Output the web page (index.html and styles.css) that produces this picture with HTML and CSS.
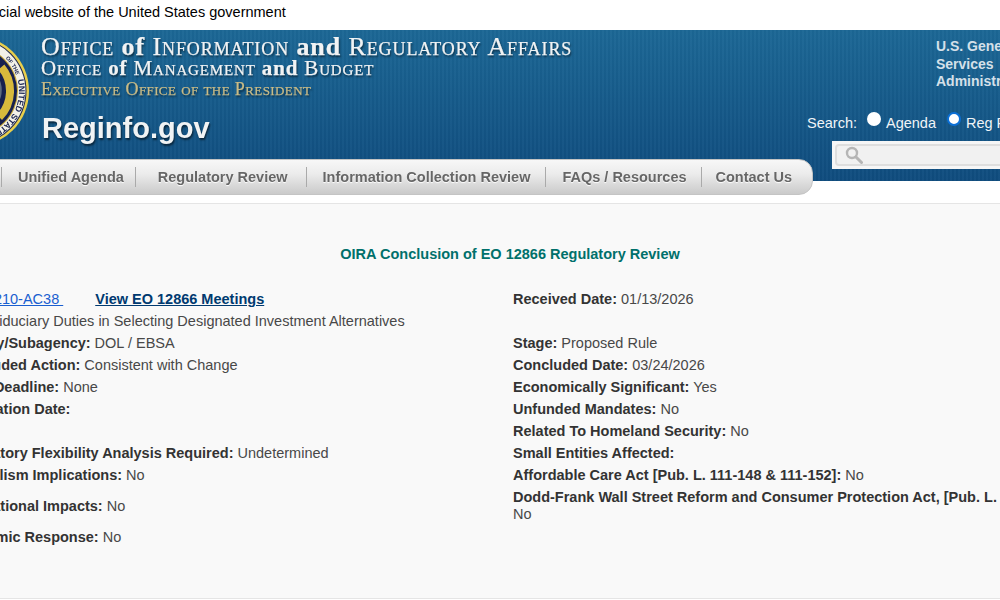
FILE: index.html
```html
<!DOCTYPE html>
<html>
<head>
    <meta charset="utf-8">
    <meta name="viewport" content="width=device-width, initial-scale=1.0">
    <title>Reginfo.gov - OIRA Conclusion of EO 12866 Regulatory Review</title>
    <link rel="stylesheet" href="styles.css">
</head>
<body>
<div class="page">
    <div class="gov-bar">An official website of the United States government</div>

    <header class="banner">
        <svg class="seal" viewBox="0 0 112 112" aria-hidden="true">
            <defs>
                <path id="seal-arc" d="M10 56a46 46 0 1 1 92 0a46 46 0 1 1-92 0"/>
            </defs>
            <circle cx="56" cy="56" r="56" fill="#e8cf4c"/>
            <circle cx="56" cy="56" r="53.5" fill="#1b2550"/>
            <circle cx="56" cy="56" r="52.5" fill="#f3f1e8"/>
            <circle cx="56" cy="56" r="45" fill="#c9a93a"/>
            <circle cx="56" cy="56" r="44" fill="#17204e"/>
            <text class="seal-text"><textPath href="#seal-arc" startOffset="48">PRESIDENT</textPath></text>
            <text class="seal-text seal-small"><textPath href="#seal-arc" startOffset="108">OF THE</textPath></text>
            <text class="seal-text"><textPath href="#seal-arc" startOffset="133">UNITED STATES</textPath></text>
            <path d="M84.3 32.2A37 37 0 0 1 82.2 82.2" fill="none" stroke="#d8b93c" stroke-width="8"/>
            <path d="M78 40a24 24 0 0 1 0 30" fill="none" stroke="#5d6a80" stroke-width="3"/>
        </svg>
        <div class="titles">
            <div class="title-main">Office <span class="lower">of</span> Information <span class="lower">and</span> Regulatory Affairs</div>
            <div class="title-sub">Office <span class="lower">of</span> Management <span class="lower">and</span> Budget</div>
            <div class="title-exec">Executive Office of the President</div>
            <div class="site-name">Reginfo.gov</div>
        </div>
        <div class="banner-right">
            <div class="gsa">U.S. General Services Administration</div>
            <form class="search-options">
                <span class="search-label">Search:</span>
                <label class="option"><input type="radio" name="scope"> Agenda</label>
                <label class="option"><input type="radio" name="scope" checked> Reg Review</label>
            </form>
            <div class="search-box">
                <div class="search-field">
                    <svg class="search-icon" viewBox="0 0 18 18" aria-hidden="true">
                        <circle cx="7" cy="7" r="5" fill="none" stroke="#b5b5b5" stroke-width="2.4"/>
                        <path d="M11 11l5.5 5.5" stroke="#b5b5b5" stroke-width="3" stroke-linecap="round"/>
                    </svg>
                </div>
            </div>
        </div>
    </header>

    <nav class="nav">
        <a class="nav-item nav-home">Home</a>
        <a class="nav-item nav-agenda">Unified Agenda</a>
        <a class="nav-item nav-review">Regulatory Review</a>
        <a class="nav-item nav-collection">Information Collection Review</a>
        <a class="nav-item nav-faq">FAQs / Resources</a>
        <a class="nav-item nav-contact">Contact Us</a>
    </nav>

    <main class="content">
        <h1 class="heading">OIRA Conclusion of EO 12866 Regulatory Review</h1>
        <div class="columns">
            <div class="col">
                <div class="row"><b>RIN:</b> <a class="rin" href="#">1210-AC38 </a><a class="meetings" href="#">View EO 12866 Meetings</a></div>
                <div class="row"><b>Title:</b> Fiduciary Duties in Selecting Designated Investment Alternatives</div>
                <div class="row"><b>Agency/Subagency:</b> DOL / EBSA</div>
                <div class="row"><b>Concluded Action:</b> Consistent with Change</div>
                <div class="row"><b>Legal Deadline:</b> None</div>
                <div class="row"><b>Publication Date:</b></div>
                <div class="row row-empty"></div>
                <div class="row"><b>Regulatory Flexibility Analysis Required:</b> Undetermined</div>
                <div class="row row-tall"><b>Federalism Implications:</b> No</div>
                <div class="row row-tall"><b>International Impacts:</b> No</div>
                <div class="row"><b>Pandemic Response:</b> No</div>
            </div>
            <div class="col">
                <div class="row"><b>Received Date:</b> 01/13/2026</div>
                <div class="row row-empty"></div>
                <div class="row"><b>Stage:</b> Proposed Rule</div>
                <div class="row"><b>Concluded Date:</b> 03/24/2026</div>
                <div class="row"><b>Economically Significant:</b> Yes</div>
                <div class="row"><b>Unfunded Mandates:</b> No</div>
                <div class="row"><b>Related To Homeland Security:</b> No</div>
                <div class="row"><b>Small Entities Affected:</b></div>
                <div class="row"><b>Affordable Care Act [Pub. L. 111-148 &amp; 111-152]:</b> No</div>
                <div class="row"><b>Dodd-Frank Wall Street Reform and Consumer Protection Act, [Pub. L. 111-203]:</b> No</div>
            </div>
        </div>
    </main>
</div>
</body>
</html>
```

FILE: styles.css
```css
html, body {
    margin: 0;
    overflow: hidden;
    background: #fff;
}

body {
    font-family: "Liberation Sans", Arial, sans-serif;
    font-size: 14.5px;
    color: #484848;
}

b {
    color: #333;
}

/* the page is scrolled sideways in the shot, so it starts left of the window */
.page {
    width: 1200px;
    margin-left: -90px;
}

.gov-bar {
    height: 30px;
    padding-left: 48px;
    line-height: 24px;
    color: #000;
}

.banner {
    display: flex;
    height: 151px;
    background:
        repeating-linear-gradient(90deg, rgba(255, 255, 255, 0.025) 0 2px, rgba(0, 0, 0, 0.025) 2px 4px),
        linear-gradient(#1c6795, #0f4c7e);
}

.seal {
    flex: none;
    width: 112px;
    height: 112px;
    margin: 5px 0 0 7px;
    filter: blur(0.4px);
}

.seal-text {
    font-family: "Liberation Sans", Arial, sans-serif;
    font-size: 8.5px;
    font-weight: bold;
    fill: #1b2550;
}

.seal-small {
    font-size: 5.5px;
}

.titles {
    flex: 1;
    margin-left: 12px;
    font-family: "Liberation Serif", "Times New Roman", serif;
    font-variant: small-caps;
    color: #f1f3f4;
    text-shadow: 1px 2px 2px rgba(0, 0, 0, 0.55);
    white-space: nowrap;
    filter: blur(0.35px);
    -webkit-text-stroke: 0.25px currentColor;
}

.lower {
    font-variant: normal;
    font-weight: bold;
}

.title-main {
    margin-top: 4px;
    font-size: 26px;
    line-height: 25px;
    letter-spacing: 0.9px;
}

.title-sub {
    font-size: 21px;
    line-height: 19px;
    letter-spacing: 0.85px;
}

.title-exec {
    font-size: 18px;
    line-height: 22px;
    letter-spacing: 0.4px;
    color: #c9bb86;
}

.site-name {
    margin: 10px 0 0 1px;
    font-family: "Liberation Sans", Arial, sans-serif;
    font-variant: normal;
    font-size: 29px;
    font-weight: bold;
    line-height: 36px;
    letter-spacing: 0;
    -webkit-text-stroke: 0;
}

.banner-right {
    flex: none;
    width: 303px;
}

.gsa {
    width: 100px;
    margin: 8px 0 0 129px;
    font-size: 14px;
    font-weight: bold;
    line-height: 17.5px;
    color: #d5e0e9;
}

.search-options {
    display: flex;
    align-items: center;
    margin-top: 24px;
    height: 17px;
    color: #f0f4f7;
}

.search-label {
    margin-right: 10px;
}

.option {
    display: flex;
    align-items: center;
    gap: 5px;
    margin-right: 11px;
    white-space: nowrap;
}

.option input {
    appearance: none;
    box-sizing: border-box;
    width: 14px;
    height: 14px;
    margin: -9px 0 0;
    border-radius: 50%;
    background: #fff;
}

.option input:checked {
    border: 2.5px solid #0b6fd6;
}

.search-box {
    width: 260px;
    height: 22px;
    margin: 9px 0 0 25px;
    padding: 3px;
    background: #f6f6f6;
}

.search-field {
    display: flex;
    align-items: center;
    height: 18px;
    padding: 0 8px;
    border: 2px solid #dedede;
    border-radius: 4px;
    background: #f1f1f1;
}

.search-icon {
    width: 18px;
    height: 18px;
}

.nav {
    display: flex;
    align-items: center;
    position: relative;
    width: 903px;
    height: 36px;
    margin-top: -22px;
    border-radius: 0 14px 14px 0;
    box-sizing: border-box;
    border: 1px solid #c4c4c4;
    background: linear-gradient(#f7f7f7, #ececec 40%, #cacaca);
    font-size: 14.5px;
    font-weight: bold;
    color: #666;
    text-shadow: 0 1px 1px #fff;
    filter: blur(0.3px);
}

.nav-item {
    display: flex;
    align-items: center;
    height: 20px;
    white-space: nowrap;
    border-left: 1px solid #aaa;
}

.nav-home {
    width: 90px;
    border-left: 0;
    box-sizing: border-box;
}

.nav-agenda {
    padding: 0 11px 0 16px;
}

.nav-review {
    padding: 0 18px 0 22px;
}

.nav-collection {
    padding: 0 15px 0 16px;
}

.nav-faq {
    padding: 0 14px 0 16px;
}

.nav-contact {
    padding-left: 14px;
}

.content {
    height: 394px;
    margin-top: 8px;
    border-top: 1px solid #e5e5e5;
    border-bottom: 1px solid #e5e5e5;
    background: #f9f9f9;
}

.heading {
    margin: 42px 0 0;
    font-size: 14.5px;
    line-height: 17px;
    text-align: center;
    color: #00706b;
}

.columns {
    display: grid;
    grid-template-columns: 561px 565px;
    margin-top: 28px;
    padding-left: 42px;
}

.row {
    min-height: 17px;
    margin-bottom: 5px;
    line-height: 17px;
}

.row-tall {
    margin-bottom: 14px;
}

.rin {
    margin-right: 32px;
    color: #1a5fd0;
}

.meetings {
    font-weight: bold;
    color: #003a70;
}
```
